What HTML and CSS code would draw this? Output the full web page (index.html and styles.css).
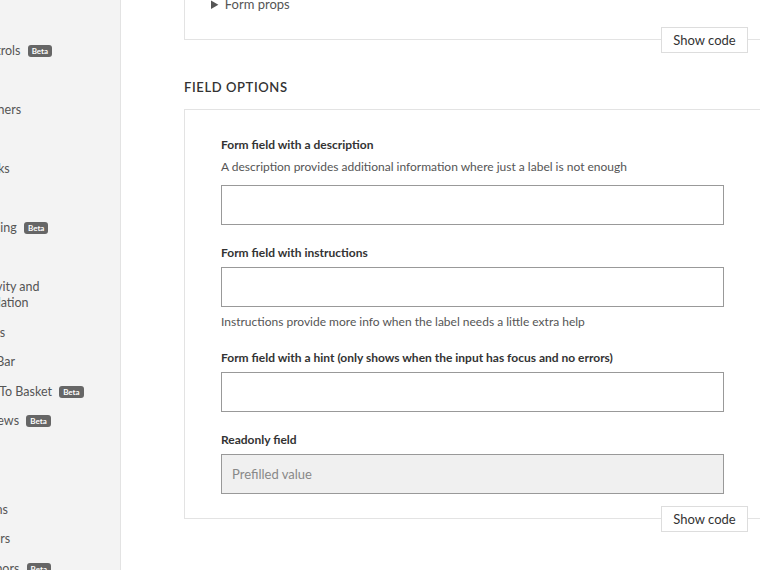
FILE: index.html
```html
<!DOCTYPE html>
<html lang="en">
<head>
  <meta charset="UTF-8" />
  <meta name="viewport" content="width=device-width, initial-scale=1.0"/>
  <title>Form fields</title>
  <link rel="stylesheet" href="styles.css">
</head>
<body>

<nav class="sidebar">
  <ul class="nav">
    <li>Controls <span class="badge">Beta</span></li>
    <li>Tabs</li>
    <li>Spinners</li>
    <li>Grid</li>
    <li>Blocks</li>
    <li>Link</li>
    <li>Loading <span class="badge">Beta</span></li>
    <li>Tags</li>
    <li class="wrap">Activity and Validation</li>
    <li>Cards</li>
    <li>Tab Bar</li>
    <li>Add To Basket <span class="badge">Beta</span></li>
    <li>Reviews <span class="badge">Beta</span></li>
    <li>Text</li>
    <li>Lists</li>
    <li>Forms</li>
    <li>Sliders</li>
    <li>Anchors <span class="badge">Beta</span></li>
  </ul>
</nav>

<main class="content">

  <div class="demo demo-top">
    <details>
      <summary>Form props</summary>
    </details>
    <button class="show-code">Show code</button>
  </div>

  <h2 class="section-title">Field options</h2>

  <div class="demo demo-fields">
    <div class="field">
      <label for="f1">Form field with a description</label>
      <p class="desc">A description provides additional information where just a label is not enough</p>
      <input type="text" id="f1"/>
    </div>

    <div class="field">
      <label for="f2">Form field with instructions</label>
      <input type="text" id="f2"/>
      <p class="instr">Instructions provide more info when the label needs a little extra help</p>
    </div>

    <div class="field">
      <label for="f3">Form field with a hint (only shows when the input has focus and no errors)</label>
      <input type="text" id="f3"/>
    </div>

    <div class="field">
      <label for="f4">Readonly field</label>
      <input type="text" id="f4" value="Prefilled value" readonly/>
    </div>

    <button class="show-code">Show code</button>
  </div>

</main>

</body>
</html>
```

FILE: styles.css
```css
:root {
  --text: #333;
  --muted: #555;
  --line: #e3e3e3;
  --side: #f3f3f3;
}
* {
  box-sizing: border-box;
}
html, body {
  margin: 0;
  height: 100%;
}
body {
  font-family: Lato, 'Open Sans', sans-serif;
  color: var(--text);
  background: #fff;
  display: flex;
  overflow: hidden;
}

/* sidebar, scrolled a little to the right */
.sidebar {
  flex: 0 0 121px;
  background: var(--side);
  border-right: 1px solid var(--line);
  overflow: hidden;
}
.nav {
  list-style: none;
  margin: 36px 0 0 -26px;
  padding: 0;
  width: 150px;
  font-size: 12.5px;
  line-height: 16px;
  color: var(--muted);
}
.nav li {
  padding: 7px 0 6.5px;
  white-space: nowrap;
}
.nav li.wrap {
  white-space: normal;
  width: 90px;
}
.badge {
  display: inline-block;
  background: #666;
  color: #fff;
  font-size: 8px;
  font-weight: 700;
  line-height: 12px;
  padding: 0 4px;
  border-radius: 3px;
  margin-left: 4px;
  vertical-align: 1px;
}

/* main column */
.content {
  flex: 1;
  padding-left: 63px;
  min-width: 0;
}
.demo {
  position: relative;
  width: 578px;
  border: 1px solid var(--line);
}
.demo-top {
  margin-top: -30px;
  border-top: none;
  padding: 24px 26px 25px;
}
summary {
  font-size: 13px;
  line-height: 20px;
  color: var(--muted);
  cursor: pointer;
}
.show-code {
  position: absolute;
  right: 13px;
  bottom: -14px;
  width: 87px;
  height: 26px;
  background: #fff;
  border: 1px solid #ddd;
  font-family: inherit;
  font-size: 13px;
  color: var(--text);
  cursor: pointer;
}
.section-title {
  margin: 39px 0 14px;
  font-size: 13px;
  line-height: 16px;
  font-weight: 600;
  letter-spacing: 0.6px;
  text-transform: uppercase;
}
.demo-fields {
  padding: 27px 37px 24px 36px;
}
.field + .field {
  margin-top: 20px;
}
.field label {
  display: block;
  font-size: 12px;
  line-height: 16px;
  font-weight: 700;
  margin-bottom: 6px;
}
.desc, .instr {
  margin: 0;
  font-size: 12px;
  line-height: 16px;
  color: var(--muted);
}
.desc {
  margin-bottom: 10px;
}
.instr {
  margin-top: 7px;
}
input[type="text"] {
  display: block;
  width: 100%;
  height: 40px;
  border: 1px solid #999;
  border-radius: 0;
  padding: 0 10px;
  font-family: inherit;
  font-size: 13px;
  color: var(--text);
}
input[readonly] {
  background: #f0f0f0;
  color: #888;
}
```
